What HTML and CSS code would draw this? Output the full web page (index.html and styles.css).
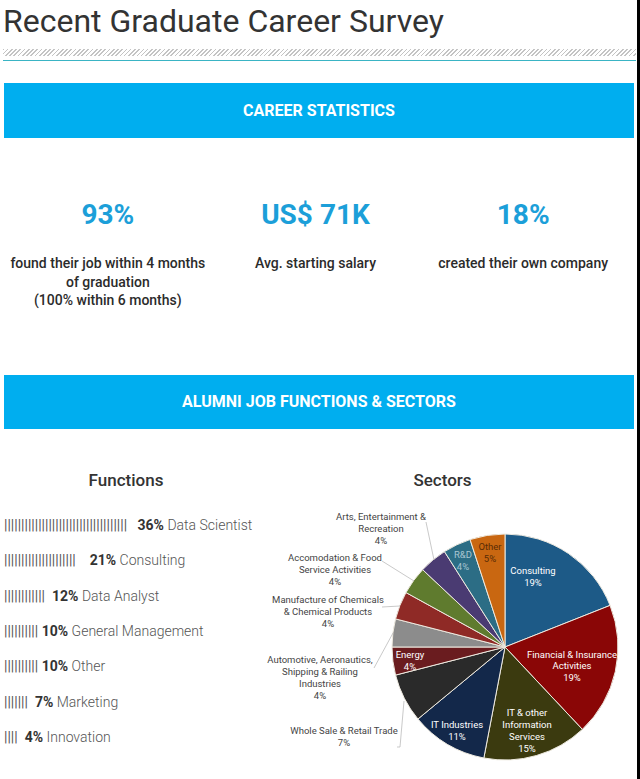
FILE: index.html
```html
<!DOCTYPE html>
<html lang="en">
<head>
<meta charset="utf-8">
<title>Recent Graduate Career Survey</title>
<link rel="stylesheet" href="styles.css">
</head>
<body>
<div class="page">
  <h1 class="title">Recent Graduate Career Survey</h1>
  <div class="hatch"></div>
  <div class="rule"></div>

  <div class="banner">CAREER STATISTICS</div>

  <div class="stats">
    <div class="stat">
      <div class="num">93%</div>
      <div class="desc">found their job within 4 months<br>of graduation<br>(100% within 6 months)</div>
    </div>
    <div class="stat">
      <div class="num">US$ 71K</div>
      <div class="desc">Avg. starting salary</div>
    </div>
    <div class="stat">
      <div class="num">18%</div>
      <div class="desc">created their own company</div>
    </div>
  </div>

  <div class="banner banner-2">ALUMNI JOB FUNCTIONS &amp; SECTORS</div>

  <div class="split">
    <div class="functions">
      <h2 class="subhead">Functions</h2>
      <ul class="func-list">
        <li><span class="bar">||||||||||||||||||||||||||||||||||||   </span><b>36%</b> <span class="lbl">Data Scientist</span></li>
        <li><span class="bar">|||||||||||||||||||||    </span><b>21%</b> <span class="lbl">Consulting</span></li>
        <li><span class="bar">||||||||||||  </span><b>12%</b> <span class="lbl">Data Analyst</span></li>
        <li><span class="bar">|||||||||| </span><b>10%</b> <span class="lbl">General Management</span></li>
        <li><span class="bar">|||||||||| </span><b>10%</b> <span class="lbl">Other</span></li>
        <li><span class="bar">|||||||  </span><b>7%</b> <span class="lbl">Marketing</span></li>
        <li><span class="bar">||||  </span><b>4%</b> <span class="lbl">Innovation</span></li>
      </ul>
    </div>
    <div class="sectors">
      <h2 class="subhead">Sectors</h2>
      <svg class="pie" width="389" height="279" viewBox="0 0 389 279">
        <g class="slices">
          <path fill="#1d5a87" d="M257 147 L257 34 A113 113 0 0 1 362.07 105.40 Z"/>
          <path fill="#8a0606" d="M257 147 L362.07 105.40 A113 113 0 0 1 334.35 229.38 Z"/>
          <path fill="#3b3a0f" d="M257 147 L334.35 229.38 A113 113 0 0 1 235.83 258.0 Z"/>
          <path fill="#13284a" d="M257 147 L235.83 258.0 A113 113 0 0 1 169.93 219.03 Z"/>
          <path fill="#2a2a2a" d="M257 147 L169.93 219.03 A113 113 0 0 1 147.55 175.10 Z"/>
          <path fill="#6a1c1f" d="M257 147 L147.55 175.10 A113 113 0 0 1 144 147 Z"/>
          <path fill="#8c8c8c" d="M257 147 L144 147 A113 113 0 0 1 147.55 118.90 Z"/>
          <path fill="#8f2a26" d="M257 147 L147.55 118.90 A113 113 0 0 1 157.98 92.56 Z"/>
          <path fill="#5f7b2e" d="M257 147 L157.98 92.56 A113 113 0 0 1 174.62 69.65 Z"/>
          <path fill="#4a3b72" d="M257 147 L174.62 69.65 A113 113 0 0 1 196.45 51.59 Z"/>
          <path fill="#2c6d85" d="M257 147 L196.45 51.59 A113 113 0 0 1 222.08 39.53 Z"/>
          <path fill="#c96711" d="M257 147 L222.08 39.53 A113 113 0 0 1 257 34 Z"/>
        </g>
        <g class="leaders">
          <polyline points="178,22 186,60"/>
          <polyline points="134,61 166,81"/>
          <polyline points="134,107 152,106"/>
          <polyline points="126,168 145,133"/>
          <polyline points="149,247 152,247 156,201"/>
        </g>
        <g class="out-labels">
          <text x="133" y="20">Arts, Entertainment &amp;</text>
          <text x="133" y="32">Recreation</text>
          <text x="133" y="44">4%</text>
          <text x="87" y="61">Accomodation &amp; Food</text>
          <text x="87" y="73">Service Activities</text>
          <text x="87" y="85">4%</text>
          <text x="80" y="103">Manufacture of Chemicals</text>
          <text x="80" y="115">&amp; Chemical Products</text>
          <text x="80" y="127">4%</text>
          <text x="72" y="163">Automotive, Aeronautics,</text>
          <text x="72" y="175">Shipping &amp; Railing</text>
          <text x="72" y="187">Industries</text>
          <text x="72" y="199">4%</text>
          <text x="96" y="234">Whole Sale &amp; Retail Trade</text>
          <text x="96" y="246">7%</text>
        </g>
        <g class="in-labels">
          <text x="285" y="74">Consulting</text>
          <text x="285" y="86">19%</text>
          <text x="324" y="158">Financial &amp; Insurance</text>
          <text x="324" y="169">Activities</text>
          <text x="324" y="181">19%</text>
          <text x="279" y="216">IT &amp; other</text>
          <text x="279" y="228">Information</text>
          <text x="279" y="240">Services</text>
          <text x="279" y="252">15%</text>
          <text x="209" y="228">IT Industries</text>
          <text x="209" y="240">11%</text>
          <text x="162" y="158">Energy</text>
          <text x="162" y="170">4%</text>
          <text class="dim-teal" x="215" y="58">R&amp;D</text>
          <text class="dim-teal" x="215" y="70">4%</text>
          <text class="dim-orange" x="242" y="50">Other</text>
          <text class="dim-orange" x="242" y="62">5%</text>
        </g>
      </svg>
    </div>
  </div>
</div>
</body>
</html>
```

FILE: styles.css
```css
html {
  background: #000;
}
body {
  margin: 0;
  width: 637px;
  min-height: 779px;
  background: #fff;
  font-family: Roboto, "Liberation Sans", sans-serif;
  color: #333;
}
.page {
  overflow: hidden;
}
.title {
  margin: 0 0 0 3px;
  padding-top: 1.5px;
  font-size: 32px;
  line-height: 38px;
  font-weight: 400;
  color: #333;
}
.hatch {
  margin: 9.5px 1px 0 3px;
  height: 7px;
  background: repeating-linear-gradient(135deg, #c4c4c4 0 1.2px, #fff 1.2px 3px);
}
.rule {
  margin: 4px 1px 0 3px;
  height: 1px;
  background: #3ab4c4;
}
.banner {
  margin: 22px 3px 0 4px;
  height: 55px;
  line-height: 55px;
  background: #00aeef;
  color: #fff;
  font-weight: 700;
  font-size: 16px;
  text-align: center;
}
.banner-2 {
  margin-top: 0;
  height: 54px;
  line-height: 54px;
}
.stats {
  display: grid;
  grid-template-columns: repeat(3, 1fr);
  margin: 0 10px 0 4px;
  padding: 60px 0 65px;
  text-align: center;
}
.num {
  font-size: 28px;
  line-height: 34px;
  font-weight: 700;
  color: #1c9fd9;
}
.desc {
  margin-top: 22px;
  font-size: 14px;
  line-height: 18.7px;
  font-weight: 500;
  color: #2b2b2b;
}
.split {
  display: grid;
  grid-template-columns: 244px 1fr;
  margin-left: 4px;
}
.subhead {
  margin: 41px 0 0;
  font-size: 17px;
  line-height: 20px;
  font-weight: 500;
  text-align: center;
  color: #333;
}
.func-list {
  list-style: none;
  margin: 18px 0 0;
  padding: 0;
  font-size: 14px;
  line-height: 35.3px;
}
.func-list li {
  white-space: pre;
}
.bar {
  color: #555;
}
.func-list b {
  font-weight: 700;
  color: #333;
}
.lbl {
  font-weight: 300;
  color: #555;
}
.pie {
  display: block;
  margin-top: 10px;
  overflow: visible;
}
.slices path {
  stroke: #eeeae0;
  stroke-width: 1;
}
.leaders polyline {
  fill: none;
  stroke: #bbb;
  stroke-width: 0.8;
}
.out-labels text,
.in-labels text {
  font-family: Roboto, "Liberation Sans", sans-serif;
  font-size: 9.5px;
  text-anchor: middle;
}
.out-labels text {
  fill: #444;
}
.in-labels text {
  fill: #fff;
}
.in-labels .dim-teal {
  fill: #a9c6d2;
}
.in-labels .dim-orange {
  fill: #5a2c05;
}
```
